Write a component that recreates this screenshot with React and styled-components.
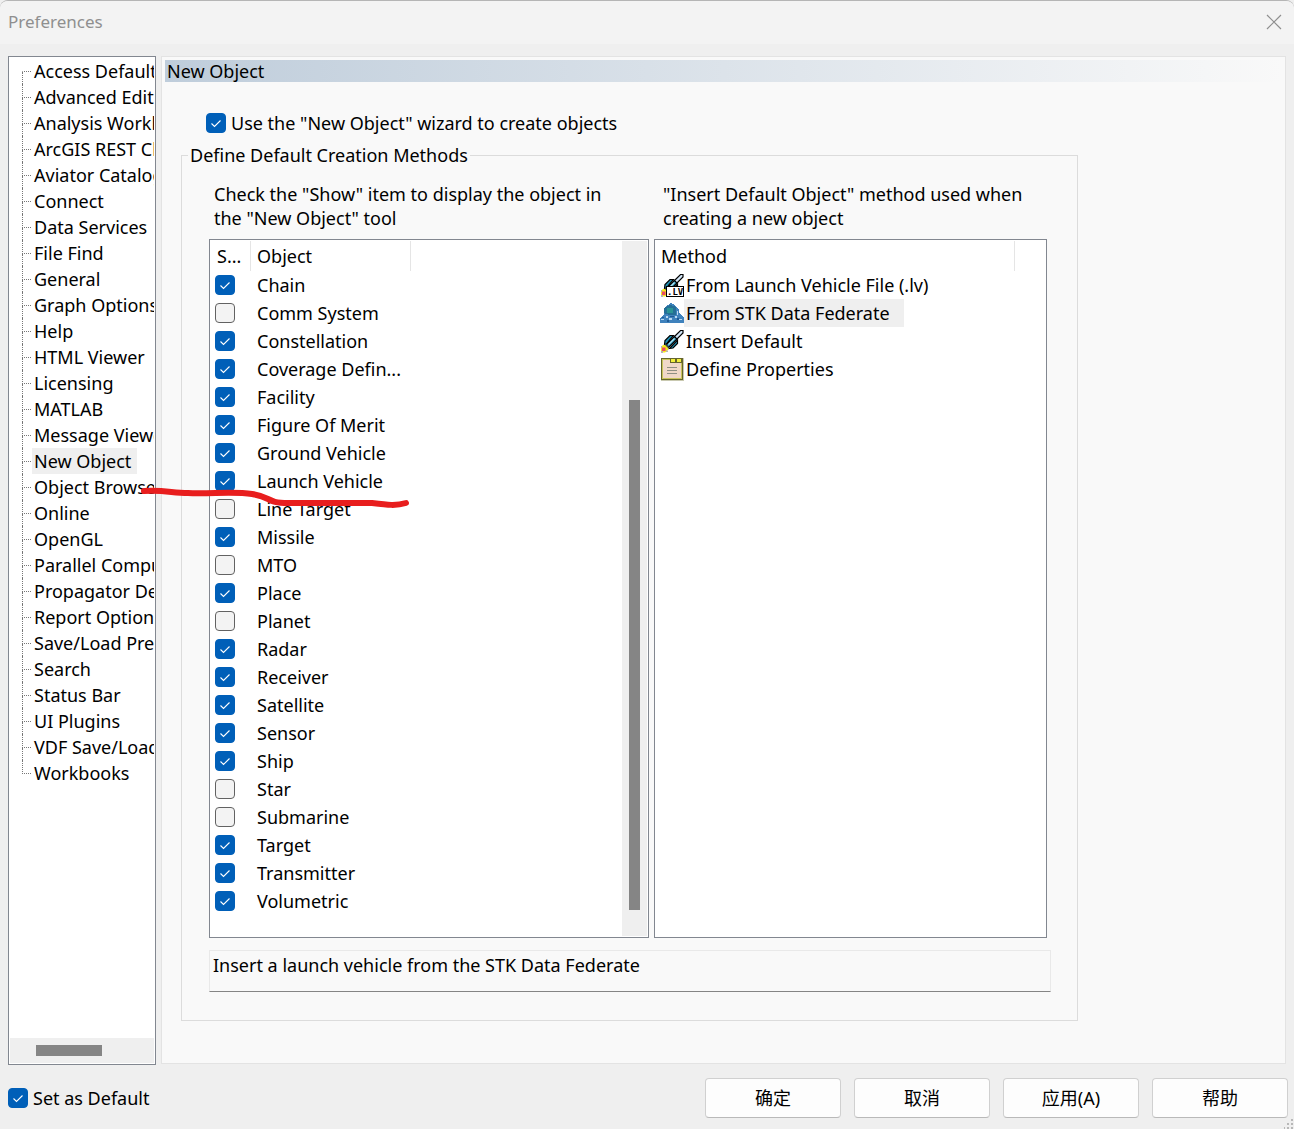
import React from "react";
import styled, { createGlobalStyle } from "styled-components";

const GlobalStyle = createGlobalStyle`
    * {
        box-sizing: border-box;
    }
    body {
        margin: 0;
        background-color: #efefef;
        color: #000;
        font-family: "Noto Sans", "Noto Sans CJK SC", sans-serif;
        font-size: 18px;
        line-height: 24px;
    }
    button {
        font: inherit;
        color: inherit;
        cursor: pointer;
    }
`;

const Window = styled.div`
    position: relative;
    display: flex;
    flex-direction: column;
    min-height: 100vh;
    border-top: 1px solid #b5b5b5;
    border-radius: 8px 8px 0 0;
    overflow: hidden;
`;

const TitleBar = styled.header`
    display: flex;
    align-items: center;
    justify-content: space-between;
    height: 43px;
    padding: 0 12px 2px 8px;
    background-color: #f3f3f3;
    color: #8f8f8f;
`;

const Title = styled.h1`
    margin: 0;
    font-size: 17px;
    font-weight: 400;
`;

const CloseButton = styled.button`
    display: flex;
    padding: 0;
    border: none;
    background: none;
`;

const Content = styled.main`
    flex: 1;
    display: flex;
    gap: 5px;
    padding: 12px 8px 0;
`;

const Tree = styled.nav`
    flex: 0 0 148px;
    min-width: 0;
    display: flex;
    flex-direction: column;
    padding: 1px;
    border: 1px solid #828790;
    background-color: white;
`;

const TreeList = styled.ul`
    flex: 1;
    margin: 0;
    padding: 0 0 0 12px;
    list-style: none;
    overflow: hidden;
`;

const TreeItem = styled.li`
    display: flex;
    height: 26px;
`;

const Branch = styled.span`
    flex: 0 0 9px;
    display: flex;
    flex-direction: column;
    &::before,
    &::after {
        content: "";
        flex: 1;
        border-left: 1px dotted #777;
    }
    &::before {
        border-bottom: 1px dotted #777;
    }
    ${TreeItem}:first-child &::before {
        border-left-color: transparent;
    }
    ${TreeItem}:last-child &::after {
        border-left-color: transparent;
    }
`;

const TreeButton = styled.button`
    flex-shrink: 0;
    margin-left: 1px;
    padding: 0 6px 0 2px;
    border: none;
    background-color: ${(props) => (props.$active ? "#efefef" : "transparent")};
    white-space: nowrap;
`;

const TreeScroll = styled.div`
    height: 25px;
    padding: 7px 26px;
    background-color: #efefef;
`;

const TreeThumb = styled.div`
    width: 66px;
    height: 11px;
    background-color: #858585;
`;

const Panel = styled.section`
    flex: 1;
    min-width: 0;
    margin-bottom: 1px;
    padding: 3px;
    border: 1px solid #e3e3e3;
    background-color: #f9f9f9;
`;

const PanelTitle = styled.h2`
    margin: 0;
    padding-left: 2px;
    background: linear-gradient(to right, #bfcddb, #f9f9f9);
    font-size: 18px;
    font-weight: 400;
    line-height: 22px;
`;

const PanelBody = styled.div`
    padding: 29px 16px 0;
`;

const CheckLabel = styled.label`
    display: flex;
    align-items: center;
    gap: 5px;
    padding-left: ${(props) => props.$indent || 0};
`;

const CheckMark = styled.span`
    position: relative;
    display: block;
    width: 20px;
    height: 20px;
    svg {
        position: absolute;
        inset: 0;
        pointer-events: none;
    }
`;

const CheckInput = styled.input`
    appearance: none;
    display: block;
    width: 20px;
    height: 20px;
    margin: 0;
    border: 1px solid #626262;
    border-radius: 4px;
    background-color: #f3f3f3;
    &:checked {
        border-color: #005fb8;
        background-color: #005fb8;
    }
`;

const Methods = styled.fieldset`
    max-width: 897px;
    min-width: 0;
    margin: 8px 0 0;
    padding: 15px 26px 28px 27px;
    border: 1px solid #dcdcdc;
`;

const Legend = styled.legend`
    margin-left: -21px;
    padding: 0 2px;
`;

const Lists = styled.div`
    display: flex;
    gap: 5px;
    padding-right: 4px;
`;

const ListColumn = styled.div`
    flex: ${(props) => props.$grow} 1 0;
    min-width: 0;
    display: flex;
    flex-direction: column;
`;

const Hint = styled.p`
    max-width: 420px;
    margin: 0 0 9px;
    padding-left: ${(props) => props.$indent};
`;

const ListBox = styled.div`
    flex: 1;
    display: flex;
    justify-content: space-between;
    min-height: 699px;
    padding: ${(props) => (props.$scroll ? "1px" : "1px 0")};
    border: 1px solid #828790;
    background-color: white;
`;

const Table = styled.table`
    align-self: flex-start;
    border-collapse: separate;
    border-spacing: 0;
    table-layout: fixed;
    width: ${(props) => props.$width};
`;

const HeadCell = styled.th`
    width: ${(props) => props.$width};
    height: 30px;
    padding: 0 0 0 6px;
    border-right: 1px solid #e5e5e5;
    font-weight: 400;
    text-align: left;
`;

const Cell = styled.td`
    height: 28px;
    padding: 0 0 0 ${(props) => props.$pad};
    white-space: nowrap;
`;

const Track = styled.div`
    flex: 0 0 25px;
    display: flex;
    flex-direction: column;
    padding: 159px 7px 26px;
    background-color: #efefef;
`;

const Thumb = styled.div`
    flex: 1;
    background-color: #858585;
`;

const MethodRow = styled.div`
    display: flex;
    align-items: center;
`;

const MethodButton = styled.button`
    height: 28px;
    padding: 0 14px 0 2px;
    border: none;
    background-color: ${(props) => (props.$active ? "#efefef" : "transparent")};
`;

const Description = styled.p`
    min-height: 42px;
    margin: 12px 0 0;
    padding: 2px 3px;
    border: 1px solid #e9e9e9;
    border-bottom-color: #858585;
`;

const Footer = styled.footer`
    display: flex;
    align-items: center;
    justify-content: space-between;
    padding: 13px 6px 11px 8px;
`;

const Actions = styled.div`
    display: flex;
    gap: 13px;
`;

const ActionButton = styled.button`
    width: 136px;
    height: 40px;
    padding: 0;
    border: 1px solid #d0d0d0;
    border-bottom-color: #b9b9b9;
    border-radius: 4px;
    background-color: #fdfdfd;
`;

const Grip = styled.svg`
    position: absolute;
    right: 0;
    bottom: 0;
`;

const RedStroke = styled.svg`
    position: absolute;
    left: 136px;
    top: 479px;
    pointer-events: none;
`;

const pages = [
    "Access Defaults",
    "Advanced Editing",
    "Analysis Workbench",
    "ArcGIS REST Client",
    "Aviator Catalog",
    "Connect",
    "Data Services",
    "File Find",
    "General",
    "Graph Options",
    "Help",
    "HTML Viewer",
    "Licensing",
    "MATLAB",
    "Message Viewer",
    "New Object",
    "Object Browser",
    "Online",
    "OpenGL",
    "Parallel Computing",
    "Propagator Defaults",
    "Report Options",
    "Save/Load Prefs",
    "Search",
    "Status Bar",
    "UI Plugins",
    "VDF Save/Load",
    "Workbooks",
];

const objects = [
    ["Chain", true],
    ["Comm System", false],
    ["Constellation", true],
    ["Coverage Defin...", true],
    ["Facility", true],
    ["Figure Of Merit", true],
    ["Ground Vehicle", true],
    ["Launch Vehicle", true],
    ["Line Target", false],
    ["Missile", true],
    ["MTO", false],
    ["Place", true],
    ["Planet", false],
    ["Radar", true],
    ["Receiver", true],
    ["Satellite", true],
    ["Sensor", true],
    ["Ship", true],
    ["Star", false],
    ["Submarine", false],
    ["Target", true],
    ["Transmitter", true],
    ["Volumetric", true],
];

const Rocket = () => (
    <g>
        <path d="M14 8 L20.5 1.5 H23 V4 L16.5 10.5Z" fill="#d3e6f7" stroke="#000" strokeWidth="1.2" />
        <path d="M4.5 15.5 L5 11.5 L10 6.5 H13.5 L6.5 15Z" fill="#1f8fb2" stroke="#000" strokeWidth="1.2" />
        <path d="M9.5 19.5 L17.5 11 V14.5 L13 19Z" fill="#1f8fb2" stroke="#000" strokeWidth="1.2" />
        <path d="M6 16 L14.5 7.5 L17 10 L8.5 18.5Z" fill="#2c9cc2" stroke="#000" strokeWidth="1.2" />
        <path d="M8.5 15.5 L14.5 9.5" stroke="#b5e2f2" strokeWidth="1.2" />
        <path d="M4 16 L6 15 L9 18 L8 20Z" fill="#444" />
        <path d="M1 18 L3 16 H5 L8 19 V21 L5 23.5 H1Z" fill="#f3ec1c" />
        <path d="M2 18.5 H5.5 V22 H2Z" fill="#ea4c62" />
        <path d="M1 22 H3 V24 H1Z M6 21.5 H8 V23 H6Z M1 17 H2 V19 H1Z" fill="#b5b5b5" />
    </g>
);

const LaunchFileIcon = () => (
    <svg width="24" height="24" viewBox="0 0 24 24">
        <Rocket />
        <rect x="6" y="13" width="18" height="11" fill="#000" />
        <rect x="7" y="14" width="16" height="9" fill="#fff" />
        <text x="7" y="22" fontFamily="DejaVu Sans Mono, monospace" fontSize="9" fontWeight="700">
            .LV
        </text>
    </svg>
);

const FederateIcon = () => (
    <svg width="24" height="24" viewBox="0 0 24 24" shapeRendering="crispEdges">
        <path d="M0 22 V17 L4 13 V7 L8 4 L11 2 L15 4 L17 7 L19 9 V12 L24 17 V22Z" fill="#3f82bd" />
        <path d="M4 7 L10 4 L16 6 V14 H9 L4 12Z" fill="#256f96" />
        <path d="M7 7 H13 V12 H7Z" fill="#2b9496" />
        <path d="M1 18 H4 V19 H1Z M6 15 H8 V17 H6Z M9 17 H12 V19 H9Z M15 15 H17 V17 H15Z M17 10 H18 V14 H17Z M19 18 H22 V19 H19Z" fill="#b9d9f2" />
        <path d="M2 16 H4 V17 H2Z M10 15 H14 V16 H10Z M7 19 H9 V21 H7Z M17 17 H19 V19 H17Z" fill="#1f5b96" />
    </svg>
);

const RocketIcon = () => (
    <svg width="24" height="24" viewBox="0 0 24 24">
        <Rocket />
    </svg>
);

const PropertiesIcon = () => (
    <svg width="24" height="24" viewBox="0 0 24 24" shapeRendering="crispEdges">
        <rect x="1" y="1" width="23" height="23" fill="#c9c9b0" />
        <rect x="1" y="1" width="22" height="22" fill="#66662c" />
        <rect x="2" y="2" width="20" height="20" fill="#c9c45c" />
        <rect x="3" y="3" width="18" height="18" fill="#f0d8c8" />
        <rect x="10" y="1" width="12" height="5" fill="#66662c" />
        <path d="M11 2 H15 V5 H11Z M17 2 H21 V5 H17Z" fill="#f2ef3d" />
        <path d="M7 10.5 H17 M7 13.5 H17 M7 16.5 H17" stroke="#8f8f83" />
    </svg>
);

const methods = [
    { name: "From Launch Vehicle File (.lv)", icon: <LaunchFileIcon /> },
    { name: "From STK Data Federate", icon: <FederateIcon />, active: true },
    { name: "Insert Default", icon: <RocketIcon /> },
    { name: "Define Properties", icon: <PropertiesIcon /> },
];

const Check = (props) => (
    <CheckMark>
        <CheckInput type="checkbox" {...props} />
        {props.defaultChecked && (
            <svg width="20" height="20" viewBox="0 0 20 20" fill="none" stroke="white" strokeWidth="1.1">
                <path d="M5.5 10.5 L8.5 13.5 L14.5 7.5" />
            </svg>
        )}
    </CheckMark>
);

class App extends React.Component {
    render() {
        return (
            <Window>
                <GlobalStyle />
                <TitleBar>
                    <Title>Preferences</Title>
                    <CloseButton aria-label="Close">
                        <svg width="16" height="16" viewBox="0 0 16 16" stroke="#8f8f8f" strokeWidth="1.2">
                            <path d="M1 1 L15 15 M15 1 L1 15" />
                        </svg>
                    </CloseButton>
                </TitleBar>
                <Content>
                    <Tree>
                        <TreeList>
                            {pages.map((page) => (
                                <TreeItem key={page}>
                                    <Branch />
                                    <TreeButton $active={page === "New Object"}>{page}</TreeButton>
                                </TreeItem>
                            ))}
                        </TreeList>
                        <TreeScroll>
                            <TreeThumb />
                        </TreeScroll>
                    </Tree>
                    <Panel>
                        <PanelTitle>New Object</PanelTitle>
                        <PanelBody>
                            <CheckLabel $indent="25px">
                                <Check defaultChecked />
                                Use the "New Object" wizard to create objects
                            </CheckLabel>
                            <Methods>
                                <Legend>Define Default Creation Methods</Legend>
                                <Lists>
                                    <ListColumn $grow={440}>
                                        <Hint $indent="5px">
                                            Check the "Show" item to display the object in the "New Object" tool
                                        </Hint>
                                        <ListBox $scroll>
                                            <Table $width="200px">
                                                <thead>
                                                    <tr>
                                                        <HeadCell $width="40px">S...</HeadCell>
                                                        <HeadCell>Object</HeadCell>
                                                    </tr>
                                                </thead>
                                                <tbody>
                                                    {objects.map(([name, shown]) => (
                                                        <tr key={name}>
                                                            <Cell $pad="4px">
                                                                <Check id={name} aria-label={name} defaultChecked={shown} />
                                                            </Cell>
                                                            <Cell $pad="6px">
                                                                <label htmlFor={name}>{name}</label>
                                                            </Cell>
                                                        </tr>
                                                    ))}
                                                </tbody>
                                            </Table>
                                            <Track>
                                                <Thumb />
                                            </Track>
                                        </ListBox>
                                    </ListColumn>
                                    <ListColumn $grow={393}>
                                        <Hint $indent="9px">
                                            "Insert Default Object" method used when creating a new object
                                        </Hint>
                                        <ListBox>
                                            <Table $width="360px">
                                                <thead>
                                                    <tr>
                                                        <HeadCell>Method</HeadCell>
                                                    </tr>
                                                </thead>
                                                <tbody>
                                                    {methods.map(({ name, icon, active }) => (
                                                        <tr key={name}>
                                                            <Cell $pad="5px">
                                                                <MethodRow>
                                                                    {icon}
                                                                    <MethodButton $active={active}>{name}</MethodButton>
                                                                </MethodRow>
                                                            </Cell>
                                                        </tr>
                                                    ))}
                                                </tbody>
                                            </Table>
                                        </ListBox>
                                    </ListColumn>
                                </Lists>
                                <Description>Insert a launch vehicle from the STK Data Federate</Description>
                            </Methods>
                        </PanelBody>
                    </Panel>
                </Content>
                <Footer>
                    <CheckLabel>
                        <Check defaultChecked />
                        Set as Default
                    </CheckLabel>
                    <Actions>
                        <ActionButton>确定</ActionButton>
                        <ActionButton>取消</ActionButton>
                        <ActionButton>应用(A)</ActionButton>
                        <ActionButton>帮助</ActionButton>
                    </Actions>
                </Footer>
                <Grip width="10" height="10" viewBox="0 0 10 10" fill="#b8b8b8">
                    <path d="M7 0h2v2h-2z M7 4h2v2h-2z M3 4h2v2h-2z M7 8h2v2h-2z M3 8h2v2h-2z M0 8h1v2h-1z" />
                </Grip>
                <RedStroke width="280" height="36" viewBox="0 0 280 36">
                    <path
                        d="M8 11 C30 10 36 13 52 13 C75 14 98 11 116 14 C136 17 130 23 152 23 H236 C252 25 260 26 270 23"
                        fill="none"
                        stroke="#e81e1e"
                        strokeWidth="6"
                        strokeLinecap="round"
                    />
                </RedStroke>
            </Window>
        );
    }
}

export default App;
